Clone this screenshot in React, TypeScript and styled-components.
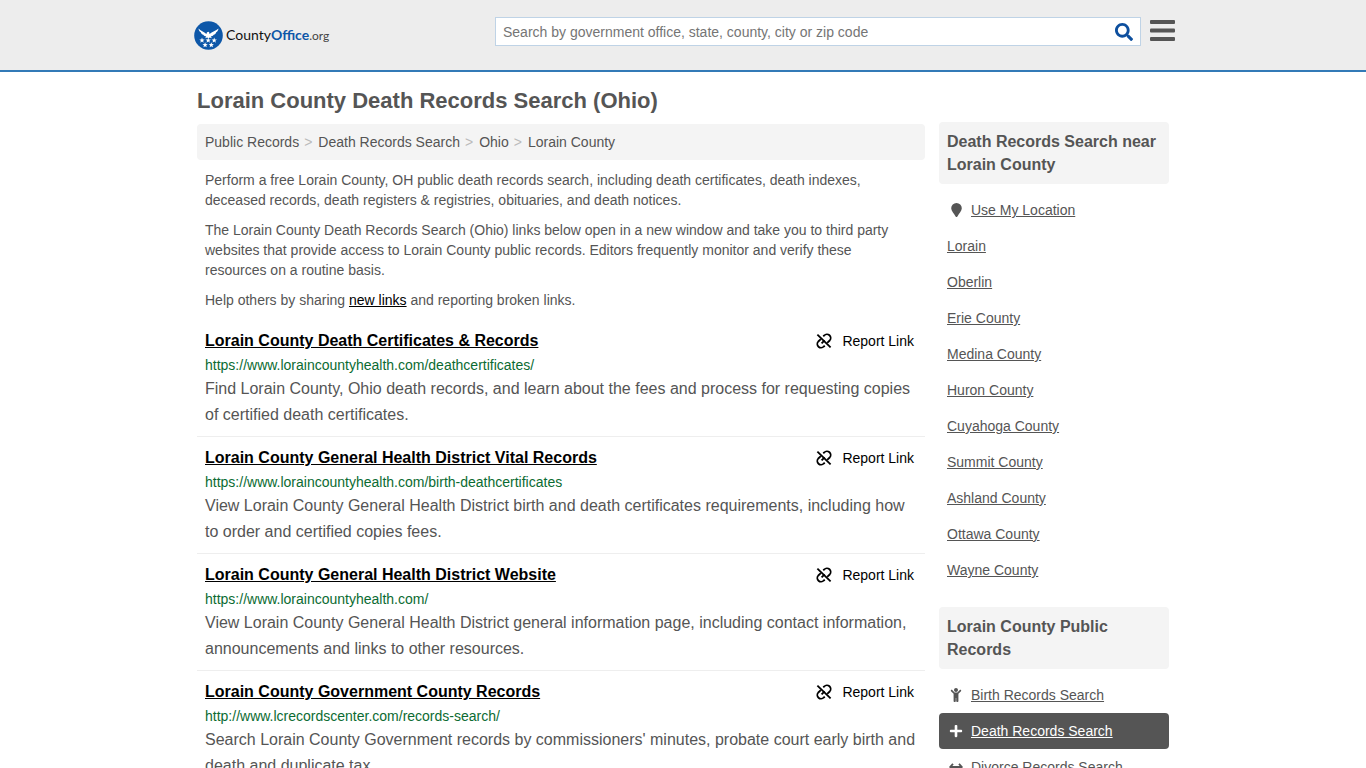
import React from "react";
import styled, { createGlobalStyle } from "styled-components";
import { FaPlus, FaSearch, FaChild } from "react-icons/fa";

const Global = createGlobalStyle`
  * { box-sizing: border-box; }
  body {
    margin: 0;
    background: #fff;
    color: #555;
    font: 14px/20px "Liberation Sans", Arial, sans-serif;
  }
  h1, h2, h3, p, ul, ol { margin: 0; padding: 0; }
  ul, ol { list-style: none; }
`;

const Header = styled.header`
  background: #ededed;
  border-bottom: 2px solid #337ab7;
`;

const HeaderInner = styled.div`
  max-width: 984px;
  height: 70px;
  margin: 0 auto;
  padding: 16px 0 0 3px;
  display: flex;
  align-items: flex-start;
  justify-content: space-between;
`;

const Logo = styled.a`
  display: flex;
  align-items: center;
  gap: 3px;
  margin-top: 4px;
  color: #111;
  font: 14px/30px Lato, "Liberation Sans", sans-serif;
  text-decoration: none;
  b { color: #0d57a8; }
  small { font-size: 12px; color: #444; }
`;

const HeaderTools = styled.div`
  display: flex;
  align-items: flex-start;
  gap: 9px;
  width: 680px;
`;

const SearchForm = styled.form`
  display: flex;
  flex: 1;
  height: 29px;
  margin-top: 1px;
  background: #fff;
  border: 1px solid #bfd3e6;
`;

const SearchInput = styled.input`
  flex: 1;
  min-width: 0;
  padding: 0 7px;
  border: 0;
  outline: 0;
  background: none;
  color: #555;
  font: inherit;
  &::placeholder { color: #757575; opacity: 1; }
`;

const IconButton = styled.button`
  display: flex;
  align-items: center;
  padding: 0;
  border: 0;
  background: none;
  color: #0d4f9e;
  cursor: pointer;
`;

const SearchButton = styled(IconButton)`
  padding: 0 7px;
`;

const MenuButton = styled(IconButton)`
  margin-top: 3px;
  color: #555;
`;

const Page = styled.div`
  max-width: 972px;
  margin: 0 auto;
  display: flex;
  gap: 14px;
`;

const Main = styled.main`
  flex: 1;
  min-width: 0;
  padding-top: 14px;
`;

const Title = styled.h1`
  margin-bottom: 8px;
  font-size: 22px;
  line-height: 30px;
`;

const Crumbs = styled.ol`
  display: flex;
  padding: 8px;
  background: #f4f4f4;
  border-radius: 4px;
  li + li::before { content: ">"; padding: 0 6px 0 5px; color: #bbb; }
  a { color: inherit; text-decoration: none; }
`;

const Para = styled.p`
  margin: 10px 0;
  padding: 0 8px;
  a { color: #000; }
`;

const Result = styled.li`
  padding: 8px;
  border-bottom: 1px solid #eee;
`;

const ResultHead = styled.div`
  display: flex;
  justify-content: space-between;
`;

const ResultTitle = styled.h2`
  font-size: 16px;
  line-height: 26px;
  a { color: #000; }
`;

const Report = styled.button`
  display: flex;
  align-items: center;
  gap: 10px;
  padding: 0 3px 0 0;
  border: 0;
  background: none;
  color: #000;
  font: inherit;
  cursor: pointer;
`;

const ResultUrl = styled.div`
  line-height: 22px;
  color: #0b6b32;
`;

const ResultText = styled.p`
  font-size: 16px;
  line-height: 26px;
`;

const Side = styled.aside`
  width: 230px;
  flex: none;
  padding-top: 50px;
`;

const Panel = styled.section`
  margin-bottom: 19px;
`;

const PanelTitle = styled.h3`
  margin-bottom: 8px;
  padding: 8px;
  background: #f4f4f4;
  border-radius: 4px;
  font-size: 16px;
  line-height: 23px;
`;

const SideLink = styled.a<{ $active?: boolean }>`
  display: flex;
  align-items: center;
  gap: 6px;
  padding: 8px;
  border-radius: 4px;
  color: ${(p) => (p.$active ? "#fff" : "#555")};
  background: ${(p) => (p.$active ? "#555" : "none")};
`;

const IconSlot = styled.span`
  display: flex;
  justify-content: center;
  width: 18px;
`;

const star = (x: number, y: number) =>
  [0, 1, 2, 3, 4, 5, 6, 7, 8, 9]
    .map((i) => {
      const r = i % 2 ? 1.2 : 2.8;
      const a = (i * Math.PI) / 5;
      return `${(x + r * Math.sin(a)).toFixed(2)},${(y - r * Math.cos(a)).toFixed(2)}`;
    })
    .join(" ");

const Emblem = () => (
  <svg width="29" height="29" viewBox="0 0 29 29" aria-hidden="true">
    <circle cx="14.5" cy="14.5" r="14.3" fill="#0d57a8" />
    <path
      fill="#fff"
      d="M4.5 7.5C6.5 10 10 10.5 12.4 13L13 11.2 15 10.7 15.5 13C18 10.5 22 10 24.5 7.5C24.3 9.5 23.4 10.6 22.2 11.2C21.8 12.7 20.8 13.5 19.7 13.7C19 14.9 17.9 15.3 16.8 15.3L17.8 17.2 15.7 16.5 14.5 17.6 13.3 16.5 11.2 17.2 12.2 15.3C11.1 15.3 10 14.9 9.3 13.7C8.2 13.5 7.2 12.7 6.8 11.2C5.6 10.6 4.7 9.5 4.5 7.5z"
    />
    {[[8, 19.4], [14.2, 19.4], [20.2, 19.4], [11.1, 24], [17.3, 24]].map(([x, y]) => (
      <polygon key={`${x}-${y}`} points={star(x, y)} fill="#fff" />
    ))}
  </svg>
);

const MenuIcon = () => (
  <svg width="25" height="24" viewBox="0 0 25 24" fill="currentColor" aria-hidden="true">
    <rect y="1" width="25" height="4" rx="1" />
    <rect y="9.5" width="25" height="4" rx="1" />
    <rect y="18" width="25" height="4" rx="1" />
  </svg>
);

const BrokenLink = () => (
  <svg width="16" height="16" viewBox="0 0 16 16" fill="none" stroke="currentColor" strokeWidth="1.8" aria-hidden="true">
    <path d="M1.4 1.6L14.6 14.4" />
    <path d="M5.6 10.4L8.6 7.4" />
    <path d="M7.2 3.3L8.2 2.5A3.700 3.700 0 0 1 13.700 7.500L11.200 9.900" />
    <path d="M8.800 12.700L7.800 13.500A3.700 3.700 0 0 1 2.300 8.500L4.800 6.100" />
  </svg>
);

const Pin = () => (
  <svg width="11" height="14" viewBox="0 0 11 14" fill="currentColor" aria-hidden="true">
    <path d="M5.5 0A5.3 5.3 0 0 0 .2 5.3C.2 8 3 10.5 4.6 13.4q.9 1.2 1.8 0C8 10.5 10.8 8 10.8 5.3A5.3 5.3 0 0 0 5.5 0z" />
  </svg>
);

const Arrows = () => (
  <svg width="14" height="14" viewBox="0 0 14 14" fill="none" stroke="currentColor" strokeWidth="1.8" aria-hidden="true">
    <path d="M1.5 7h11M4 3.8L1.2 7 4 10.2M10 3.8l2.8 3.2L10 10.2" />
  </svg>
);

const results = [
  ["Lorain County Death Certificates & Records", "https://www.loraincountyhealth.com/deathcertificates/", "Find Lorain County, Ohio death records, and learn about the fees and process for requesting copies of certified death certificates."],
  ["Lorain County General Health District Vital Records", "https://www.loraincountyhealth.com/birth-deathcertificates", "View Lorain County General Health District birth and death certificates requirements, including how to order and certified copies fees."],
  ["Lorain County General Health District Website", "https://www.loraincountyhealth.com/", "View Lorain County General Health District general information page, including contact information, announcements and links to other resources."],
  ["Lorain County Government County Records", "http://www.lcrecordscenter.com/records-search/", "Search Lorain County Government records by commissioners' minutes, probate court early birth and death and duplicate tax."],
];

const places = ["Lorain", "Oberlin", "Erie County", "Medina County", "Huron County", "Cuyahoga County", "Summit County", "Ashland County", "Ottawa County", "Wayne County"];

export default function App() {
  return (
    <>
      <Global />
      <Header>
        <HeaderInner>
          <Logo href="#">
            <Emblem />
            <span>County<b>Office</b><small>.org</small></span>
          </Logo>
          <HeaderTools>
            <SearchForm role="search">
              <SearchInput aria-label="Search" placeholder="Search by government office, state, county, city or zip code" />
              <SearchButton type="submit" aria-label="Submit search"><FaSearch size={18} /></SearchButton>
            </SearchForm>
            <MenuButton type="button" aria-label="Menu"><MenuIcon /></MenuButton>
          </HeaderTools>
        </HeaderInner>
      </Header>
      <Page>
        <Main>
          <Title>Lorain County Death Records Search (Ohio)</Title>
          <Crumbs>
            {["Public Records", "Death Records Search", "Ohio", "Lorain County"].map((c) => (
              <li key={c}><a href="#">{c}</a></li>
            ))}
          </Crumbs>
          <Para>Perform a free Lorain County, OH public death records search, including death certificates, death indexes, deceased records, death registers &amp; registries, obituaries, and death notices.</Para>
          <Para>The Lorain County Death Records Search (Ohio) links below open in a new window and take you to third party websites that provide access to Lorain County public records. Editors frequently monitor and verify these resources on a routine basis.</Para>
          <Para>Help others by sharing <a href="#">new links</a> and reporting broken links.</Para>
          <ul>
            {results.map(([title, url, text]) => (
              <Result key={title}>
                <ResultHead>
                  <ResultTitle><a href="#">{title}</a></ResultTitle>
                  <Report type="button"><BrokenLink />Report Link</Report>
                </ResultHead>
                <ResultUrl>{url}</ResultUrl>
                <ResultText>{text}</ResultText>
              </Result>
            ))}
          </ul>
        </Main>
        <Side>
          <Panel>
            <PanelTitle>Death Records Search near Lorain County</PanelTitle>
            <SideLink href="#"><IconSlot><Pin /></IconSlot>Use My Location</SideLink>
            {places.map((p) => <SideLink href="#" key={p}>{p}</SideLink>)}
          </Panel>
          <Panel>
            <PanelTitle>Lorain County Public Records</PanelTitle>
            <SideLink href="#"><IconSlot><FaChild size={14} /></IconSlot>Birth Records Search</SideLink>
            <SideLink href="#" $active><IconSlot><FaPlus size={14} /></IconSlot>Death Records Search</SideLink>
            <SideLink href="#"><IconSlot><Arrows /></IconSlot>Divorce Records Search</SideLink>
          </Panel>
        </Side>
      </Page>
    </>
  );
}
